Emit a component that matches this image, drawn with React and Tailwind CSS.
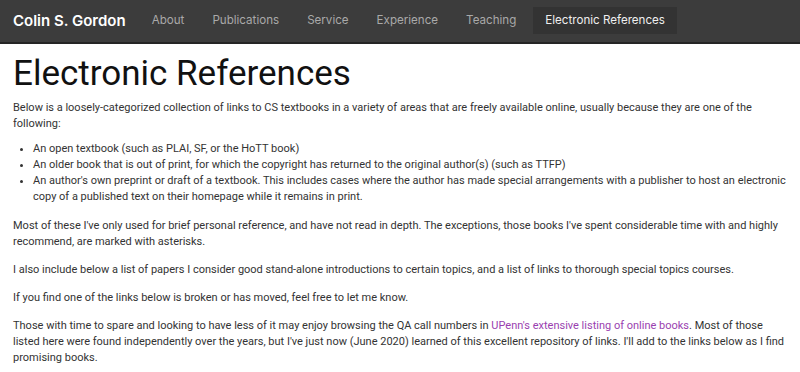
export default function App() {
  const nav = ["About", "Publications", "Service", "Experience", "Teaching"];
  return (
    <div className="min-h-[372px] bg-white">
      <nav className="h-[44px] bg-[#3c3c3c] border-b-2 border-[#252525] flex items-center px-[13px] font-['Inter',sans-serif]">
        <span className="text-white text-[15px] font-semibold mr-[12px]">Colin S. Gordon</span>
        <div className="flex items-center">
          {nav.map((n) => (
            <span key={n} className="text-[#a9a9a9] text-[11.6px] px-[14px] py-[6px]">{n}</span>
          ))}
          <span className="text-[#eeeeee] text-[11.6px] px-[12px] h-[27px] flex items-center bg-[#333333] ml-[3px]">Electronic References</span>
        </div>
      </nav>
      <main className="px-[13px] font-['Roboto',sans-serif] text-[#333333] text-[11px] leading-[16px]">
        <h1 className="text-[35px] leading-[40px] font-normal text-[#111111] mt-[10px] mb-[6px]">Electronic References</h1>
        <p>Below is a loosely-categorized collection of links to CS textbooks in a variety of areas that are freely available online, usually because they are one of the following:</p>
        <ul className="list-disc pl-[20px] mt-[9px] mb-[13px]">
          <li>An open textbook (such as PLAI, SF, or the HoTT book)</li>
          <li>An older book that is out of print, for which the copyright has returned to the original author(s) (such as TTFP)</li>
          <li>An author's own preprint or draft of a textbook. This includes cases where the author has made special arrangements with a publisher to host an electronic copy of a published text on their homepage while it remains in print.</li>
        </ul>
        <p className="mb-[12px]">Most of these I've only used for brief personal reference, and have not read in depth. The exceptions, those books I've spent considerable time with and highly recommend, are marked with asterisks.</p>
        <p className="mb-[12px]">I also include below a list of papers I consider good stand-alone introductions to certain topics, and a list of links to thorough special topics courses.</p>
        <p className="mb-[12px]">If you find one of the links below is broken or has moved, feel free to let me know.</p>
        <p>Those with time to spare and looking to have less of it may enjoy browsing the QA call numbers in <a className="text-[#9a3fb0]">UPenn's extensive listing of online books</a>. Most of those listed here were found independently over the years, but I've just now (June 2020) learned of this excellent repository of links. I'll add to the links below as I find promising books.</p>
      </main>
    </div>
  );
}
